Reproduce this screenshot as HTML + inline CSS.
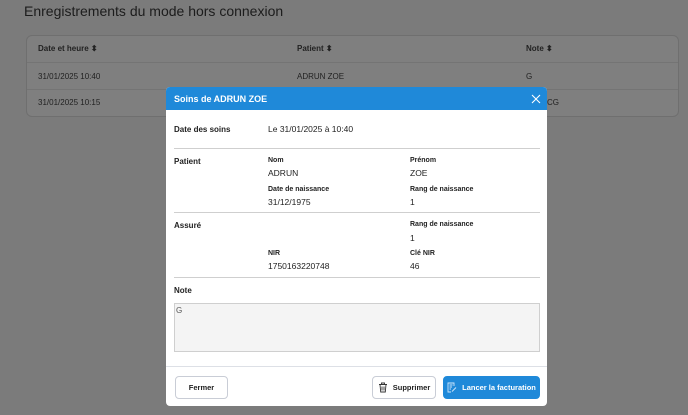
<!DOCTYPE html><html><head><style>
*{margin:0;padding:0;box-sizing:border-box}
body{width:688px;height:415px;background:#7b7b7b;font-family:"Liberation Sans",sans-serif;position:relative;overflow:hidden;color:#222}
.a{position:absolute;white-space:nowrap}
.b{font-weight:bold}
.s{font-size:8px}.m{font-size:8.5px}
.hr{position:absolute;left:8px;width:366px;height:1px;background:#cfcfcf}
.btn{position:absolute;top:289px;height:23px;border:1px solid #c9cdd6;border-radius:4px;background:#fff;font-size:7.5px;font-weight:bold;display:flex;align-items:center;justify-content:center;gap:5px}
</style></head><body>
<div class="a" style="left:24px;top:3px;font-size:14px;color:#1c1c1c">Enregistrements du mode hors connexion</div>
<div class="a" style="left:26px;top:35px;width:653px;height:82px;border:1px solid #6f6f6f;border-radius:6px;background:#7f7f7f"></div>
<div class="a" style="left:27px;top:62px;width:651px;height:1px;background:#747474"></div>
<div class="a" style="left:27px;top:89px;width:651px;height:1px;background:#747474"></div>
<div class="a b s" style="left:38px;top:44px">Date et heure ⬍</div>
<div class="a b s" style="left:297px;top:44px">Patient ⬍</div>
<div class="a b s" style="left:526px;top:44px">Note ⬍</div>
<div class="a s" style="left:38px;top:72px">31/01/2025 10:40</div>
<div class="a s" style="left:297px;top:72px">ADRUN ZOE</div>
<div class="a s" style="left:526px;top:72px">G</div>
<div class="a s" style="left:38px;top:98px">31/01/2025 10:15</div>
<div class="a s" style="left:547px;top:98px">CG</div>

<div class="a" style="left:166px;top:87px;width:381px;height:319px;background:#fff;border-radius:4px;overflow:hidden">
 <div style="height:23px;background:#1f89d9;color:#fff;font-size:9px;font-weight:bold;padding:7px 8px">Soins de ADRUN ZOE</div>
 <svg class="a" style="left:365px;top:7px" width="10" height="10" viewBox="0 0 10 10"><path d="M1 1L9 9M9 1L1 9" stroke="#fff" stroke-width="1.1"/></svg>
 <div class="a b s" style="left:8px;top:38px">Date des soins</div>
 <div class="a m" style="left:102px;top:37px">Le 31/01/2025 à 10:40</div>
 <div class="hr" style="top:61px"></div>
 <div class="a b s" style="left:8px;top:70px">Patient</div>
 <div class="a b" style="left:102px;top:70px;font-size:7px">Nom</div>
 <div class="a m" style="left:102px;top:81px">ADRUN</div>
 <div class="a b" style="left:244px;top:70px;font-size:7px">Prénom</div>
 <div class="a m" style="left:244px;top:81px">ZOE</div>
 <div class="a b" style="left:102px;top:99px;font-size:7px">Date de naissance</div>
 <div class="a m" style="left:102px;top:110px">31/12/1975</div>
 <div class="a b" style="left:244px;top:99px;font-size:7px">Rang de naissance</div>
 <div class="a m" style="left:244px;top:110px">1</div>
 <div class="hr" style="top:125px"></div>
 <div class="a b s" style="left:8px;top:134px">Assuré</div>
 <div class="a b" style="left:244px;top:134px;font-size:7px">Rang de naissance</div>
 <div class="a m" style="left:244px;top:146px">1</div>
 <div class="a b" style="left:102px;top:163px;font-size:7px">NIR</div>
 <div class="a m" style="left:102px;top:174px">1750163220748</div>
 <div class="a b" style="left:244px;top:163px;font-size:7px">Clé NIR</div>
 <div class="a m" style="left:244px;top:174px">46</div>
 <div class="hr" style="top:190px"></div>
 <div class="a b s" style="left:8px;top:199px">Note</div>
 <div class="a" style="left:8px;top:216px;width:366px;height:49px;background:#f4f4f4;border:1px solid #cfcfcf;font-size:8px;color:#555;padding:2px 1px">G</div>
 <div class="a" style="left:0;top:279px;width:381px;height:1px;background:#dde0e6"></div>
 <div class="btn" style="left:9px;width:53px">Fermer</div>
 <div class="btn" style="left:206px;width:64px"><svg width="10" height="11" viewBox="0 0 10 11"><path d="M1 2.5H9M3.5 2.5V1H6.5V2.5M2 2.5L2.7 10H7.3L8 2.5M4 4.5V8.5M6 4.5V8.5" fill="none" stroke="#333" stroke-width=".9"/></svg>Supprimer</div>
 <div class="btn" style="left:277px;width:97px;background:#1f89d9;border-color:#1f89d9;color:#fff"><svg width="10" height="11" viewBox="0 0 10 11"><path d="M7 4V1H1V10H4M2.5 3H5.5M2.5 5H5M2.5 7H4M5 9.5L9 5.5" fill="none" stroke="#cfe6fa" stroke-width=".9"/></svg>Lancer la facturation</div>
</div>
</body></html>
